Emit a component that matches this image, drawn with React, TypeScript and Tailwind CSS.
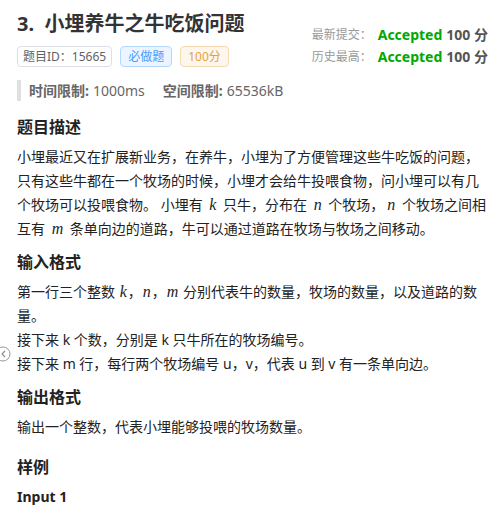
import React from "react";

const font = { fontFamily: '"Noto Sans", "Noto Sans CJK SC", sans-serif' };

function M({ children, wide }: { children: React.ReactNode; wide?: boolean }) {
  return (
    <span
      className={wide ? "italic text-[16px] leading-[1] px-[3px]" : "italic text-[16px] leading-[1] px-[1px]"}
      style={{ fontFamily: '"Liberation Serif", serif' }}
    >
      {children}
    </span>
  );
}

export default function App() {
  return (
    <div className="relative w-[501px] h-[514px] overflow-hidden bg-white text-[#333]" style={font}>
      <div className="pl-[17px] pr-[13px]">
        <div className="flex justify-between">
          <div>
            <h1 className="text-[20px] font-bold leading-[28px] pt-[10px] text-[#333]">3.&nbsp;&nbsp;小埋养牛之牛吃饭问题</h1>
            <div className="flex gap-[8px] mt-[8px]">
              <span className="h-[21px] px-[5px] flex items-center text-[12px] text-[#606266] border border-[#dcdfe6] rounded-[4px] bg-white">题目ID：15665</span>
              <span className="h-[21px] px-[7px] flex items-center text-[12px] text-[#409eff] border border-[#b3d8ff] rounded-[4px] bg-[#ecf5ff]">必做题</span>
              <span className="h-[21px] px-[7px] flex items-center text-[12px] text-[#e6a23c] border border-[#f5dab1] rounded-[4px] bg-[#fdf6ec]">100分</span>
            </div>
            <div className="mt-[13px] border-l-[4px] border-[#e0e0e0] pl-[8px] h-[21px] flex items-center text-[14px] text-[#666]">
              <span className="font-bold">时间限制:</span>
              <span className="ml-[4px]">1000ms</span>
              <span className="font-bold ml-[18px]">空间限制:</span>
              <span className="ml-[4px]">65536kB</span>
            </div>
          </div>
          <div className="pt-[24px] text-[14px] leading-[22px]">
            <div className="flex items-center">
              <span className="text-[12px] text-[#999]">最新提交：</span>
              <span className="font-bold text-[#00a800] ml-[6px]">Accepted</span>
              <span className="font-bold text-[#555] ml-[4px]">100 分</span>
            </div>
            <div className="flex items-center">
              <span className="text-[12px] text-[#999]">历史最高：</span>
              <span className="font-bold text-[#00a800] ml-[6px]">Accepted</span>
              <span className="font-bold text-[#555] ml-[4px]">100 分</span>
            </div>
          </div>
        </div>

        <h2 className="mt-[14px] text-[16px] font-bold leading-[24px] text-[#222]">题目描述</h2>
        <p className="mt-[6px] text-[14px] leading-[24px] text-[#222]">
          小埋最近又在扩展新业务，在养牛，小埋为了方便管理这些牛吃饭的问题，只有这些牛都在一个牧场的时候，小埋才会给牛投喂食物，问小埋可以有几个牧场可以投喂食物。 小埋有 <M wide>k</M> 只牛，分布在 <M wide>n</M> 个牧场，<M wide>n</M> 个牧场之间相互有 <M wide>m</M> 条单向边的道路，牛可以通过道路在牧场与牧场之间移动。
        </p>

        <h2 className="mt-[9px] text-[16px] font-bold leading-[24px] text-[#222]">输入格式</h2>
        <p className="mt-[6px] text-[14px] leading-[24px] text-[#222]">
          第一行三个整数 <M>k</M>，<M>n</M>，<M>m</M> 分别代表牛的数量，牧场的数量，以及道路的数量。
          <br />
          接下来 k 个数，分别是 k 只牛所在的牧场编号。
          <br />
          接下来 m 行，每行两个牧场编号 u，v，代表 u 到 v 有一条单向边。
        </p>

        <h2 className="mt-[9px] text-[16px] font-bold leading-[24px] text-[#222]">输出格式</h2>
        <p className="mt-[6px] text-[14px] leading-[24px] text-[#222]">输出一个整数，代表小埋能够投喂的牧场数量。</p>

        <h2 className="mt-[16px] text-[16px] font-bold leading-[24px] text-[#222]">样例</h2>
        <h3 className="mt-[6px] text-[14px] font-bold leading-[24px] text-[#222]">Input 1</h3>
      </div>

      <svg className="absolute left-0 top-[345px]" width="12" height="18" viewBox="0 0 12 18">
        <circle cx="3" cy="9" r="7" fill="white" stroke="#999" strokeWidth="1" />
        <path d="M5 6 L2 9 L5 12" fill="none" stroke="#888" strokeWidth="1.1" />
      </svg>
    </div>
  );
}
